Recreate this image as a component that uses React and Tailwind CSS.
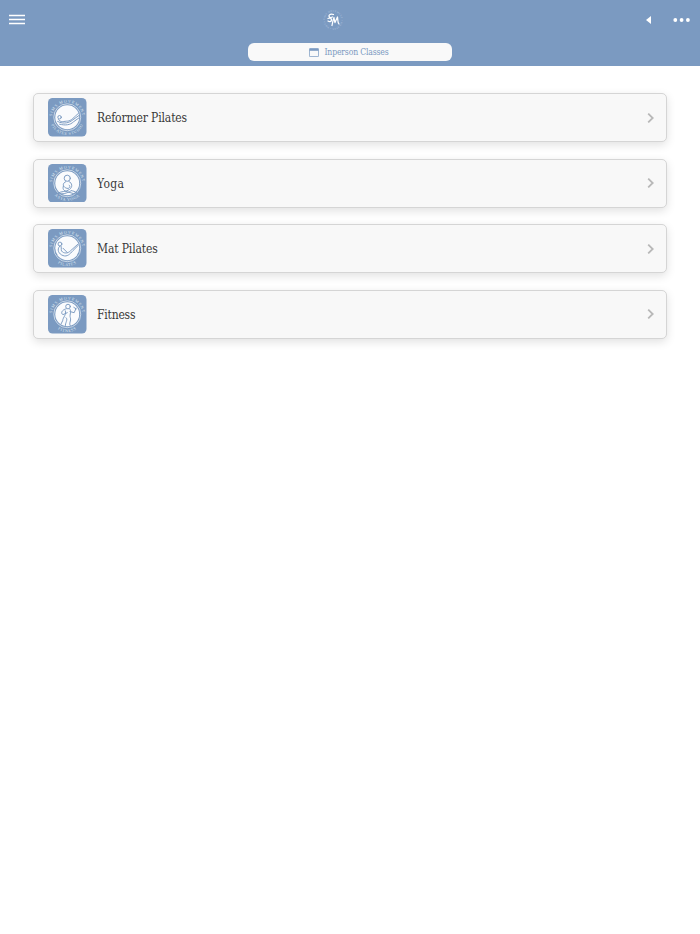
import { useId } from 'react';

const CLASSES = [
    { name: 'Reformer Pilates', caption: 'PILATES STUDIO', art: 'reformer', tracking: 'tracking-[-0.14px]' },
    { name: 'Yoga', caption: 'ASYA YOGA', art: 'yoga', tracking: 'tracking-[0.3px]' },
    { name: 'Mat Pilates', caption: 'PILATES', art: 'mat', tracking: 'tracking-[-0.14px]' },
    { name: 'Fitness', caption: 'FITNESS', art: 'fitness', tracking: 'tracking-[-0.2px]' },
];

function Figure({ art }) {
    if (art === 'reformer') return (
        <>
            <circle cx="30" cy="50" r="4.5" />
            <path d="M27 56 C33 65 42 60 51 60 C60 60 68 49 79 40 M25 61 C37 67 50 66 60 60 L81 45 M30 68 C46 72 58 70 66 62 L80 52" />
        </>
    );
    if (art === 'yoga') return (
        <>
            <circle cx="50" cy="37" r="8" />
            <path d="M46 46 C37 50 38 58 46 62 C53 66 61 61 55 55 M54 45 C64 50 64 60 56 66 C47 73 35 70 25 76 C38 80 50 75 58 71 M40 57 C36 68 44 71 53 73 C62 75 70 80 76 76 C70 71 65 70 60 69" />
        </>
    );
    if (art === 'mat') return (
        <>
            <circle cx="31" cy="39" r="5" />
            <path d="M30 45 C22 54 28 65 39 69 C50 73 57 65 65 56 L79 42 M34 45 C36 52 32 56 38 60 C43 63 51 64 58 57 L77 40 M39 50 L50 61" />
        </>
    );
    return (
        <>
            <circle cx="52" cy="30" r="6" />
            <path d="M47 36 C36 38 32 48 39 51 L50 46 M56 36 C63 42 55 50 58 59 C61 67 53 74 58 80 M45 41 C49 51 39 57 38 67 L34 75 M47 59 C53 64 44 72 45 81 M57 43 L68 46 L73 34 M67 32 L73 36" />
        </>
    );
}

function ClassBadge({ art, caption }) {
    const id = useId();
    return (
        <svg viewBox="0 0 100 100" className="h-[38.5px] w-[38.5px] shrink-0" aria-hidden="true">
            <defs>
                <path id={`${id}-top`} d="M12 62 A39.5 39.5 0 1 1 88 62" />
                <path id={`${id}-bottom`} d="M4 50 A46 46 0 0 0 96 50" />
            </defs>
            <rect width="100" height="100" rx="12" fill="#7b9ac1" />
            <circle cx="50" cy="50" r="35" fill="none" stroke="#dfe7f1" strokeWidth="2" />
            <circle cx="50" cy="50" r="31" fill="#fafbfd" />
            <g fill="none" stroke="#7b9ac1" strokeWidth="2.5" strokeLinecap="round" strokeLinejoin="round">
                <Figure art={art} />
            </g>
            <g fill="#dfe8f2" fontFamily="'Liberation Serif', serif" fontSize="10.5" textAnchor="middle">
                <text letterSpacing="2.2"><textPath href={`#${id}-top`} startOffset="50%">SIMS MOVEMENT</textPath></text>
                <text letterSpacing="1.6"><textPath href={`#${id}-bottom`} startOffset="50%">{caption}</textPath></text>
            </g>
        </svg>
    );
}

function Logo() {
    const id = useId();
    return (
        <svg viewBox="0 0 40 40" className="h-5 w-5" aria-label="Sims Movement">
            <path id={id} d="M3.5 20 A16.5 16.5 0 0 1 36.5 20 A16.5 16.5 0 0 1 3.5 20" fill="none" />
            <text fill="#bccde2" fontFamily="'Liberation Serif', serif" fontSize="4.6" letterSpacing=".8">
                <textPath href={`#${id}`}>SIMS MOVEMENT • PILATES • YOGA</textPath>
            </text>
            <g fill="none" stroke="#fff" strokeWidth="2.5" strokeLinecap="round" strokeLinejoin="round">
                <path d="M21 9 C14 7 9 11 14 15 C20 20 16 26 10 22 M10 17 L19 14" />
                <path d="M18 31 C19 25 20 20 22 15 C23 20 23 24 24 25 L29 14 C30 20 29 26 32 28" />
            </g>
        </svg>
    );
}

function Header() {
    return (
        <header className="h-[66px] bg-[#7b9ac1]">
            <div className="flex h-[39px] items-center pl-[9px] pr-[10px]">
                <button aria-label="Menu" className="flex w-4 flex-col">
                    <svg viewBox="0 0 16 11" className="h-[11px] w-4" stroke="white" strokeWidth="1.5">
                        <path d="M0 1.5 H16 M0 5.5 H16 M0 9.5 H16" />
                    </svg>
                </button>
                <div className="ml-[298px]"><Logo /></div>
                <div className="ml-auto flex items-center gap-[22px]">
                    <button aria-label="Back">
                        <svg viewBox="0 0 5 8" className="h-2 w-[5px]" fill="white"><path d="M5 0 V8 L0 4Z" /></svg>
                    </button>
                    <button aria-label="More">
                        <svg viewBox="0 0 17 4" className="h-1 w-[17px]" fill="white">
                            <circle cx="2.3" cy="2" r="1.9" />
                            <circle cx="8.6" cy="2" r="1.9" />
                            <circle cx="14.9" cy="2" r="1.9" />
                        </svg>
                    </button>
                </div>
            </div>
            <div className="flex justify-center pt-1">
                <button className="flex h-[18px] w-[204px] items-center justify-center gap-[5px] rounded-[6px] bg-[#f9f9f9] pr-[2px] text-[#7b9ac1]">
                    <svg viewBox="0 0 10 9" className="h-[9px] w-[10px]" fill="none" stroke="currentColor" strokeWidth=".8">
                        <rect x=".4" y=".6" width="9.2" height="8" rx=".7" />
                        <path d="M.5 1.7 H9.5" strokeWidth="2.2" />
                    </svg>
                    <span className="whitespace-nowrap text-[8.6px] leading-none tracking-[-0.17px]">Inperson Classes</span>
                </button>
            </div>
        </header>
    );
}

export default function App() {
    return (
        <div className="min-h-screen bg-white font-['DejaVu_Serif_Condensed','DejaVu_Serif',serif] [font-stretch:condensed]">
            <Header />
            <main className="flex flex-col gap-[16.6px] px-[33px] pt-[27px]">
                {CLASSES.map(item => (
                    <button key={item.name} className="flex h-[49px] items-center rounded-[5px] border border-[#d5d5d5] bg-[#f8f8f8] pl-[14px] pr-3 text-left shadow-[0_3px_10px_rgba(0,0,0,0.12)]">
                        <ClassBadge art={item.art} caption={item.caption} />
                        <span className={`ml-[10.5px] pt-px text-[12px] leading-4 text-[#383838] ${item.tracking}`}>{item.name}</span>
                        <svg viewBox="0 0 7 10" className="ml-auto h-[10px] w-[7px]" fill="none" stroke="#b8b8b8" strokeWidth="1.8">
                            <path d="M1.2 .6 L5.7 5 L1.2 9.4" />
                        </svg>
                    </button>
                ))}
            </main>
        </div>
    );
}
